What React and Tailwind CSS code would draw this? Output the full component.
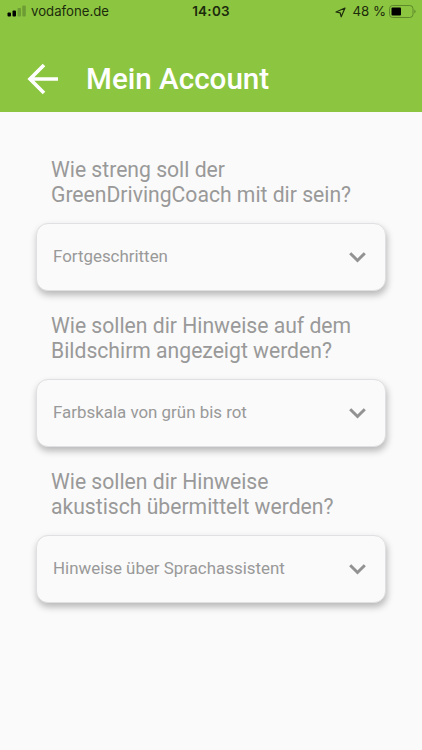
import React from 'react';

const questions = [
  { lines: ['Wie streng soll der', 'GreenDrivingCoach mit dir sein?'], value: 'Fortgeschritten' },
  { lines: ['Wie sollen dir Hinweise auf dem', 'Bildschirm angezeigt werden?'], value: 'Farbskala von grün bis rot' },
  { lines: ['Wie sollen dir Hinweise', 'akustisch übermittelt werden?'], value: 'Hinweise über Sprachassistent' },
];

const StatusBar = () => {
  return (
    <div className="h-6 pl-[7px] pr-[6px] grid grid-cols-[1fr_auto_1fr] items-center font-['Inter',sans-serif] text-[13px] text-[#1c2b0c]">
      <div className="flex items-center gap-[5px]">
        <svg className="-mt-px" width="19" height="12" viewBox="0 0 19 12">
          <rect x="0.500" y="7.500" width="3.500" height="4" rx="1" fill="#000" />
          <rect x="5.500" y="5.500" width="3.500" height="6" rx="1" fill="#000" />
          <rect x="10.500" y="3" width="3.500" height="8.500" rx="1" fill="#6d9c35" />
          <rect x="15.300" y="0.500" width="3.500" height="11" rx="1" fill="#6d9c35" />
        </svg>
        <span className="text-[13.200px]">vodafone.de</span>
      </div>
      <span className="-mt-px -ml-px text-[13.500px] font-semibold tracking-[0.250px]">14:03</span>
      <div className="flex items-center justify-end">
        <svg className="mr-[6px]" width="11" height="11" viewBox="0 0 11 11" fill="none" stroke="currentColor" strokeWidth="1.200" strokeLinejoin="round">
          <path d="M10 1 6.200 9.800 5.200 5.800 1 5z" />
        </svg>
        <span className="mr-[3px] text-[13.300px]">48 %</span>
        <svg className="-mt-px" width="27" height="13" viewBox="0 0 27 13" fill="none">
          <rect x="0.500" y="0.500" width="23.500" height="12" rx="3.200" stroke="#5f8a2c" />
          <rect x="2.500" y="2.500" width="9.500" height="8" rx="1" fill="#000" />
          <path d="M25.300 4.500v4q1.300-.5 1.300-2t-1.300-2" fill="#5f8a2c" />
        </svg>
      </div>
    </div>
  );
};

const App = () => {
  return (
    <div className="w-full h-[750px] bg-[#fafafa] font-['Roboto',sans-serif] overflow-hidden">
      <header className="h-28 bg-[#8cc640]">
        <StatusBar />
        <div className="h-[88px] pt-5 pl-[27px] flex items-start text-white">
          <svg className="mt-[19px]" width="32" height="32" viewBox="0 0 32 32" fill="none" stroke="currentColor" strokeWidth="3.600">
            <path d="M31 16H4M17 2 3 16l14 14" />
          </svg>
          <h1 className="ml-[27px] mt-[15px] text-[29.600px] leading-10 font-medium">Mein Account</h1>
        </div>
      </header>
      <main className="px-9 pt-[45px]">
        {questions.map((q) => (
          <section key={q.value} className="h-[156px]">
            <h2 className="h-[66px] pl-[15px] text-[21.150px] leading-[25px] text-[#999]">
              {q.lines[0]}
              <br />
              {q.lines[1]}
            </h2>
            <button className="w-[350px] h-[68px] pl-4 pr-[19px] flex items-center justify-between rounded-xl border border-[#e0e0e2] bg-[#fafafa] text-[16.900px] text-[#999] shadow-[1px_4px_7px_rgba(0,0,0,0.27)]">
              <span className="-mt-px">{q.value}</span>
              <svg width="17" height="11" viewBox="0 0 17 11" fill="none" stroke="#929292" strokeWidth="3">
                <path d="m1.200 1.200 7.300 7.300 7.300-7.300" />
              </svg>
            </button>
          </section>
        ))}
      </main>
    </div>
  );
};

export default App;
